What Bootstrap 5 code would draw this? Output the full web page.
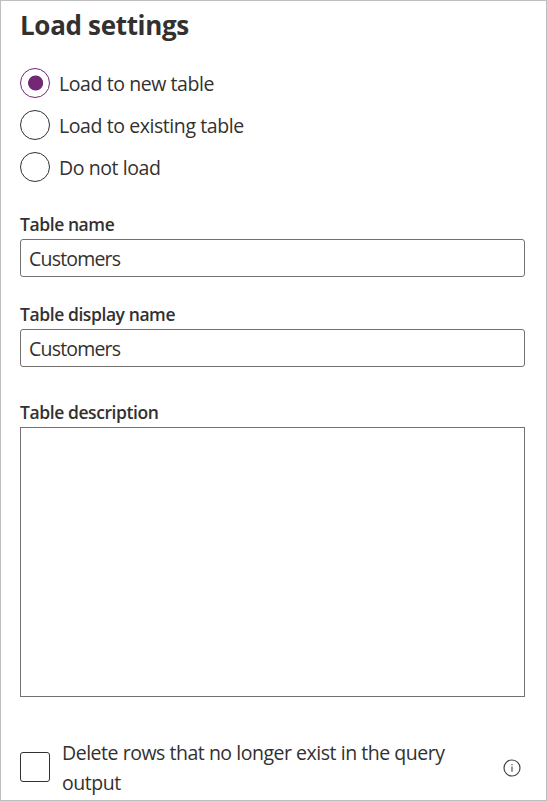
<!DOCTYPE html>
<html lang="en">
<head>
<meta charset="utf-8">
<meta name="viewport" content="width=device-width, initial-scale=1">
<title>Load settings</title>
<link href="https://cdn.jsdelivr.net/npm/bootstrap@5.3.0/dist/css/bootstrap.min.css" rel="stylesheet">
<style>
body { font-family: "Segoe UI", "Open Sans", "Noto Sans", sans-serif; font-size: 19.5px; color: #323130; background: #fff; }
.settings-panel { height: 801px; border: 1px solid #bfbfbf; padding: 8px 21px 0 19px; }
.panel-title { font-size: 26px; line-height: 32px; font-weight: 700; letter-spacing: -.33px; margin-bottom: 27px; }
.choices { gap: 12px; margin-bottom: 31px; }
.choices .form-check-input { width: 30px; height: 30px; margin: 0; border: 1px solid #323130; background: none; box-shadow: none; flex: none; }
.choices .form-check-input:checked { border-color: #742774; background: radial-gradient(circle at 14.6px 14px, #742774 7.1px, transparent 7.9px); }
.choices .form-check-label { line-height: 30px; margin-left: 9px; padding-top: 1px; height: 30px; letter-spacing: -.42px; }
.field-label { font-size: 17.5px; line-height: 22px; font-weight: 600; letter-spacing: -.42px; margin-bottom: 4px; }
.settings-panel .form-control { border: 1px solid #737271; color: #323130; font-size: 19.5px; border-radius: 3px; padding: 1px 8px; height: 38px; letter-spacing: -.8px; }
.settings-panel .description-box { height: 270px; border-radius: 0; resize: none; }
.name-field { margin-bottom: 26px; }
.display-field { margin-bottom: 34px; }
.description-field { margin-bottom: 41px; }
.delete-row .form-check-input { width: 30px; height: 30px; margin: 14px 12px 0 0; border: 1px solid #323130; border-radius: 3px; flex: none; }
.delete-row .form-check-label { line-height: 30px; letter-spacing: -.47px; }
.info-icon { margin: 21px 4px 0 0; }
</style>
</head>
<body>
<main class="settings-panel overflow-hidden">
  <h1 class="panel-title">Load settings</h1>
  <div class="choices d-flex flex-column">
    <div class="d-flex"><input class="form-check-input" type="radio" name="load" id="loadNew" checked><label class="form-check-label" for="loadNew">Load to new table</label></div>
    <div class="d-flex"><input class="form-check-input" type="radio" name="load" id="loadExisting"><label class="form-check-label" for="loadExisting">Load to existing table</label></div>
    <div class="d-flex"><input class="form-check-input" type="radio" name="load" id="loadNone"><label class="form-check-label" for="loadNone">Do not load</label></div>
  </div>
  <div class="name-field">
    <label class="field-label d-block" for="tableName">Table name</label>
    <input class="form-control" id="tableName" type="text" value="Customers">
  </div>
  <div class="display-field">
    <label class="field-label d-block" for="displayName">Table display name</label>
    <input class="form-control" id="displayName" type="text" value="Customers">
  </div>
  <div class="description-field">
    <label class="field-label d-block" for="description">Table description</label>
    <textarea class="form-control description-box" id="description"></textarea>
  </div>
  <div class="delete-row d-flex align-items-start">
    <input class="form-check-input" type="checkbox" id="deleteRows">
    <label class="form-check-label" for="deleteRows">Delete rows that no longer exist in the query<br>output</label>
    <svg class="info-icon ms-auto flex-shrink-0" width="18" height="18" viewBox="0 0 18 18" fill="none" stroke="#484644" role="img" aria-label="Information"><circle cx="9" cy="9" r="8" stroke-width="1.2"/><path d="M9 7.5v5.3M9 5v1.3" stroke-width="1.1"/></svg>
  </div>
</main>
<script src="https://cdn.jsdelivr.net/npm/bootstrap@5.3.0/dist/js/bootstrap.bundle.min.js"></script>
</body>
</html>
